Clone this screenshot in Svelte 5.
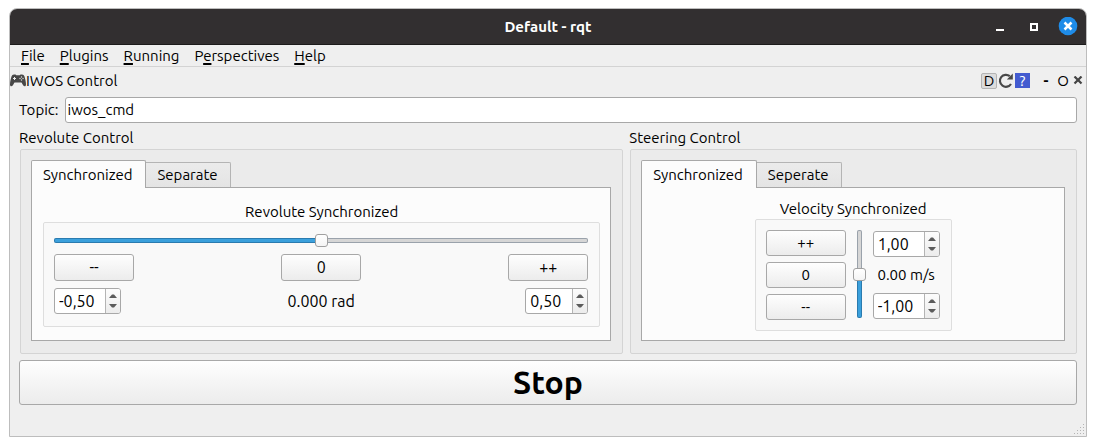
<script>
  const menus = [
    ['', 'F', 'ile'],
    ['', 'P', 'lugins'],
    ['', 'R', 'unning'],
    ['P', 'e', 'rspectives'],
    ['', 'H', 'elp']
  ];

  let topic = $state('iwos_cmd');
  let position = $state(0);
  let velocity = $state(0);
  let positionMin = $state('-0,50');
  let positionMax = $state('0,50');
  let velocityMax = $state('1,00');
  let velocityMin = $state('-1,00');
  let revoluteTab = $state(0);
  let steeringTab = $state(0);

  const parse = (text) => Number(text.replace(',', '.')) || 0;
  const shift = (text, by) => (parse(text) + by).toFixed(2).replace('.', ',');
  const clamp = (v, lo, hi) => Math.min(hi, Math.max(lo, v));

  let pLow = $derived(parse(positionMin));
  let pHigh = $derived(parse(positionMax));
  let vLow = $derived(parse(velocityMin));
  let vHigh = $derived(parse(velocityMax));
  let pFill = $derived(((position - pLow) / (pHigh - pLow || 1)) * 100);
  let vFill = $derived(((velocity - vLow) / (vHigh - vLow || 1)) * 100);

  function stop() {
    position = 0;
    velocity = 0;
  }
</script>

{#snippet spin(label, value, set, narrow)}
  <div class="spin" class:narrow>
    <input type="text" aria-label={label} {value} onchange={(e) => set(e.currentTarget.value)} />
    <div class="steps">
      <button type="button" aria-label="Increase" onclick={() => set(shift(value, 0.1))}>
        <svg width="8" height="4" viewBox="0 0 8 4"><path d="M0 4L3 .5h2L8 4z" fill="#5b5b5b" /></svg>
      </button>
      <button type="button" aria-label="Decrease" onclick={() => set(shift(value, -0.1))}>
        <svg width="8" height="4" viewBox="0 0 8 4"><path d="M0 0L3 3.500h2L8 0z" fill="#5b5b5b" /></svg>
      </button>
    </div>
  </div>
{/snippet}

{#snippet tabs(names, active, pick)}
  <div class="tabs" role="tablist">
    {#each names as name, i}
      <button type="button" role="tab" class="tab" class:active={active === i} aria-selected={active === i} onclick={() => pick(i)}>{name}</button>
    {/each}
  </div>
{/snippet}

<div class="window">
  <header class="titlebar">
    <h1>Default - rqt</h1>
    <div class="window-buttons">
      <button type="button" class="minimize" aria-label="Minimize">
        <svg width="10" height="18" viewBox="0 0 10 18"><path d="M1 11h8v2H1z" fill="#fff" /></svg>
      </button>
      <button type="button" aria-label="Maximize">
        <svg width="10" height="18" viewBox="0 0 10 18"><path d="M2 6h6v6H2z" fill="none" stroke="#fff" stroke-width="2" /></svg>
      </button>
      <button type="button" aria-label="Close">
        <svg width="20" height="20" viewBox="0 0 20 20">
          <circle cx="10" cy="9" r="9.300" fill="#1f8ce8" />
          <path d="M6.500 5.500l7 7m0-7l-7 7" stroke="#fff" stroke-width="2.500" />
        </svg>
      </button>
    </div>
  </header>

  <nav class="menubar">
    {#each menus as [before, key, after]}
      <button type="button">{before}<u>{key}</u>{after}</button>
    {/each}
  </nav>

  <div class="dock">
    <svg class="pad" width="16" height="13" viewBox="0 0 16 13">
      <path d="M4 .5h1.500l.8.8h3.400l.8-.8H12c1.300 0 2 .7 2.500 2C15.300 5 16 8 16 10.500c0 2.300-1.900 2.200-2.900.7L11.500 8.500h-7L2.900 11.200C1.900 12.700 0 12.800 0 10.500 0 8 .7 5 1.500 2.500 2 1.200 2.700.5 4 .5z" fill="#484848" />
      <path d="M4.500 3v3M3 4.500h3" stroke="#eee" />
      <circle cx="11.500" cy="3" r=".7" fill="#ddd" /><circle cx="13" cy="4.500" r=".7" fill="#ddd" />
      <circle cx="10" cy="4.500" r=".7" fill="#ddd" /><circle cx="11.500" cy="6" r=".7" fill="#ddd" />
    </svg>
    <h2>IWOS Control</h2>
    <div class="dock-buttons">
      <button type="button" class="letter framed">D</button>
      <button type="button" aria-label="Reload">
        <svg width="16" height="16" viewBox="0 0 16 16">
          <path d="M11.800 3.200A6 6 0 1 0 13 11" fill="none" stroke="#484848" stroke-width="2.200" />
          <path d="M14.800 .5v6H8.800z" fill="#484848" />
        </svg>
      </button>
      <button type="button" class="help" aria-label="Help">?</button>
      <button type="button" class="letter dash">-</button>
      <button type="button" class="letter">O</button>
      <button type="button" class="shut" aria-label="Close panel">
        <svg width="10" height="10" viewBox="0 0 10 10"><path d="M1.500 .5l7 7m0-7l-7 7" stroke="#444" stroke-width="2.200" /></svg>
      </button>
    </div>
  </div>

  <main>
    <div class="topic">
      <label for="topic">Topic:</label>
      <input id="topic" type="text" bind:value={topic} />
    </div>

    <div class="columns">
      <section>
        <h3>Revolute Control</h3>
        <div class="group">
          {@render tabs(['Synchronized', 'Separate'], revoluteTab, (i) => (revoluteTab = i))}
          <div class="pane revolute" role="tabpanel">
            <h4>Revolute Synchronized</h4>
            <div class="inner revolute-box">
              <input class="slider" type="range" aria-label="Revolute position" min={pLow} max={pHigh} step="0.001" bind:value={position} style:--fill="{pFill}%" />
              <div class="thirds">
                <button type="button" class="push large" onclick={() => (position = clamp(position - 0.1, pLow, pHigh))}>--</button>
                <button type="button" class="push large" onclick={() => (position = 0)}>0</button>
                <button type="button" class="push large" onclick={() => (position = clamp(position + 0.1, pLow, pHigh))}>++</button>
              </div>
              <div class="thirds">
                {@render spin('Minimum position', positionMin, (v) => (positionMin = v), false)}
                <output class="reading">{position.toFixed(3)} rad</output>
                {@render spin('Maximum position', positionMax, (v) => (positionMax = v), true)}
              </div>
            </div>
          </div>
        </div>
      </section>

      <section>
        <h3>Steering Control</h3>
        <div class="group">
          {@render tabs(['Synchronized', 'Seperate'], steeringTab, (i) => (steeringTab = i))}
          <div class="pane steering" role="tabpanel">
            <h4>Velocity Synchronized</h4>
            <div class="inner steering-box">
              <div class="stack">
                <button type="button" class="push" onclick={() => (velocity = clamp(velocity + 0.1, vLow, vHigh))}>++</button>
                <button type="button" class="push" onclick={() => (velocity = 0)}>0</button>
                <button type="button" class="push" onclick={() => (velocity = clamp(velocity - 0.1, vLow, vHigh))}>--</button>
              </div>
              <input class="slider vertical" type="range" aria-label="Velocity" min={vLow} max={vHigh} step="0.01" bind:value={velocity} style:--fill="{vFill}%" />
              <div class="limits">
                {@render spin('Maximum velocity', velocityMax, (v) => (velocityMax = v), false)}
                <output>{velocity.toFixed(2)} m/s</output>
                {@render spin('Minimum velocity', velocityMin, (v) => (velocityMin = v), false)}
              </div>
            </div>
          </div>
        </div>
      </section>
    </div>

    <button type="button" class="push stop" onclick={stop}>Stop</button>
  </main>

  <footer>
    <svg width="12" height="12" viewBox="0 0 12 12" fill="#b4b4b4">
      <path d="M9 0h1v1H9zM6 3h1v1H6zM9 3h1v1H9zM3 6h1v1H3zM6 6h1v1H6zM9 6h1v1H9zM0 9h1v1H0zM3 9h1v1H3zM6 9h1v1H6zM9 9h1v1H9z" />
    </svg>
  </footer>
</div>

<style>
  :global(body) {
    background: #fff;
  }

  .window,
  .window * {
    box-sizing: border-box;
  }

  .window {
    margin: 8px 9px;
    border: 1px solid #bdbdbd;
    border-radius: 8px 8px 0 0;
    background: #efefef;
    color: #000;
    font: 15px/20px Ubuntu, "Noto Sans", sans-serif;
    overflow: hidden;
  }

  h1, h2, h3, h4 {
    margin: 0;
    font-size: 15px;
    font-weight: 400;
  }

  button,
  input {
    font: inherit;
    color: inherit;
  }

  button {
    padding: 0;
    border: 0;
    background: none;
  }

  svg {
    display: block;
  }

  .titlebar {
    display: grid;
    grid-template-columns: 1fr auto 1fr;
    align-items: center;
    height: 36px;
    padding: 0 8px;
    border-bottom: 1px solid #1c1b1b;
    background: #322f30;
    color: #fff;
  }

  .titlebar h1 {
    grid-column: 2;
    font-weight: 700;
  }

  .window-buttons {
    display: flex;
    align-items: center;
    justify-content: flex-end;
    gap: 19px;
  }

  .minimize {
    margin-right: 5px;
  }

  .menubar {
    display: flex;
    gap: 15px;
    height: 22px;
    padding-left: 11px;
    border-bottom: 1px solid #d3d3d3;
  }

  u {
    text-decoration-thickness: 2px;
    text-underline-offset: 2px;
    text-decoration-skip-ink: none;
  }

  .dock {
    display: flex;
    align-items: center;
    height: 26px;
    padding: 1px 3px 0 0;
  }

  .dock-buttons {
    display: flex;
    align-items: center;
    gap: 1px;
    margin-left: auto;
  }

  .letter {
    width: 16px;
    height: 16px;
    line-height: 16px;
  }

  .framed {
    border: 1px solid #b4b4b4;
    border-radius: 2px;
    background: #dcdcdc;
    line-height: 14px;
  }

  .help {
    width: 15px;
    height: 15px;
    background: #435bd0;
    color: #fff;
    line-height: 15px;
  }

  .dash {
    margin-left: 7px;
    font-weight: 700;
  }

  .shut {
    padding-left: 1px;
  }

  main {
    display: flex;
    flex-direction: column;
    padding: 4px 9px 0;
  }

  .topic {
    display: flex;
    align-items: center;
    gap: 6px;
  }

  .topic input {
    flex: 1;
    min-width: 0;
    height: 26px;
    padding: 0 2px 1px;
    border: 1px solid #a8a8a8;
    border-radius: 3px;
    background: #fff;
  }

  .columns {
    display: grid;
    grid-template-columns: 27fr 20fr;
    gap: 6px;
    padding: 5px 0 6px;
  }

  section {
    display: flex;
    flex-direction: column;
  }

  .group {
    flex: 1;
    display: flex;
    flex-direction: column;
    margin: 1px 0 0 1px;
    padding: 10px 11px 12px 10px;
    border: 1px solid #d4d4d4;
    border-radius: 2px;
    background: #ebebeb;
  }

  .tabs {
    display: flex;
    align-items: flex-end;
  }

  .tab {
    height: 25px;
    padding: 0 12px 0 11px;
    border: 1px solid #b4b4b4;
    border-width: 1px 1px 0 0;
    border-radius: 0 2px 0 0;
    background: linear-gradient(#ebebeb, #e4e4e4);
  }

  .tab.active {
    position: relative;
    height: 28px;
    margin-bottom: -1px;
    padding-right: 13px;
    border-color: #a8a8a8;
    border-left-width: 1px;
    border-radius: 2px 2px 0 0;
    background: #fcfcfc;
  }

  .pane {
    flex: 1;
    display: flex;
    flex-direction: column;
    align-items: center;
    border: 1px solid #a8a8a8;
    background: #fcfcfc;
  }

  .revolute {
    padding: 14px 10px 13px 11px;
  }

  .steering {
    padding: 11px 11px 9px;
  }

  .inner {
    border: 1px solid #dedede;
    border-radius: 2px;
    background: #f9f9f9;
  }

  .revolute-box {
    display: flex;
    flex-direction: column;
    gap: 7px;
    align-self: stretch;
    padding: 10px 11px 12px 10px;
  }

  .steering-box {
    display: flex;
    gap: 7px;
    padding: 10px 11px 10px 10px;
  }

  .thirds {
    display: grid;
    grid-template-columns: 1fr auto 1fr;
    align-items: center;
  }

  .thirds > :global(:last-child) {
    justify-self: end;
  }

  .push {
    width: 80px;
    height: 26px;
    border: 1px solid #a8a8a8;
    border-radius: 3px;
    background: linear-gradient(#fefefe, #ececec);
  }

  .push.large {
    height: 27px;
    padding-bottom: 1px;
    font-size: 16px;
  }

  .reading {
    font-size: 16px;
    line-height: 26px;
  }

  .stack,
  .limits {
    display: flex;
    flex-direction: column;
    gap: 6px;
  }

  .limits {
    justify-content: space-between;
    padding: 1px 0;
    text-align: center;
  }

  .spin {
    display: flex;
    width: 67px;
    height: 26px;
    border: 1px solid #a8a8a8;
    border-radius: 3px;
    background: #fff;
    overflow: hidden;
  }

  .spin.narrow {
    width: 63px;
  }

  .spin input {
    flex: 1;
    min-width: 0;
    padding: 0 0 0 4px;
    border: 0;
    outline: 0;
    background: none;
    font-size: 16px;
  }

  .steps {
    display: flex;
    flex-direction: column;
    justify-content: center;
    gap: 6px;
    width: 15px;
    border-left: 1px solid #b4b4b4;
    background: linear-gradient(#fcfcfc, #ececec);
  }

  .steps svg {
    margin: 0 auto;
  }

  .slider {
    --track: linear-gradient(to right, #3ba0dc var(--fill), #d6d6d6 var(--fill));
    appearance: none;
    width: 100%;
    height: 14px;
    margin: 0;
    background: none;
  }

  .slider::-webkit-slider-runnable-track {
    height: 5px;
    border-radius: 2px;
    background: var(--track);
    box-shadow: inset 0 0 0 1px rgb(0 30 60 / 28%);
  }

  .slider::-webkit-slider-thumb {
    appearance: none;
    width: 13px;
    height: 13px;
    margin-top: -4px;
    border: 1px solid #a0a0a0;
    border-radius: 3px;
    background: linear-gradient(#fff, #f4f4f4);
  }

  .slider.vertical {
    --track: linear-gradient(to top, #3ba0dc var(--fill), #d6d6d6 var(--fill));
    writing-mode: vertical-lr;
    direction: rtl;
    width: 13px;
    height: 88px;
  }

  .slider.vertical::-webkit-slider-runnable-track {
    width: 5px;
    height: 100%;
  }

  .slider.vertical::-webkit-slider-thumb {
    margin: 0 0 0 -4px;
  }

  .stop {
    width: 100%;
    height: 45px;
    font-size: 32px;
    font-weight: 700;
    line-height: 43px;
  }

  footer {
    display: flex;
    align-items: flex-end;
    justify-content: flex-end;
    height: 31px;
  }
</style>
